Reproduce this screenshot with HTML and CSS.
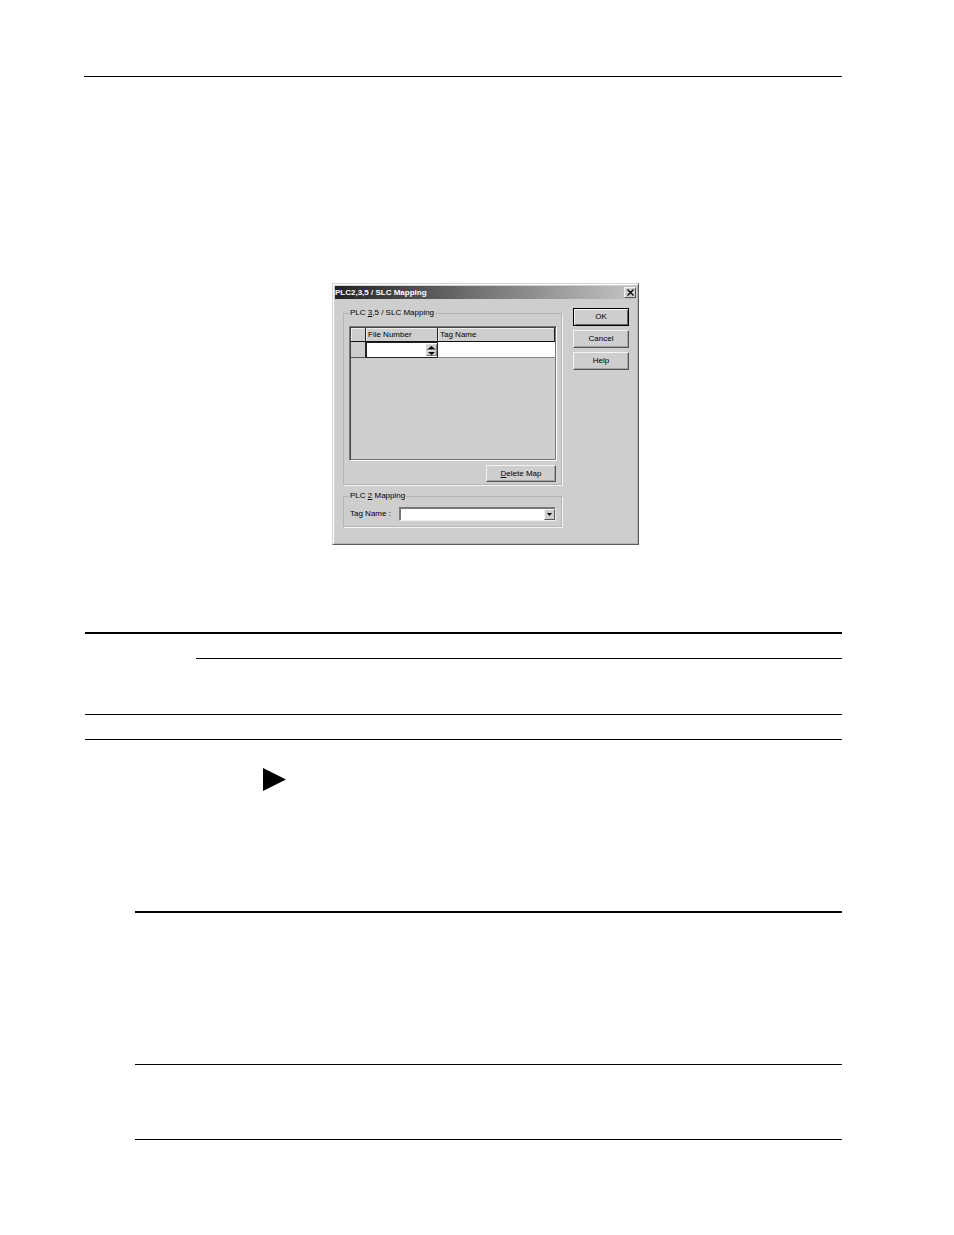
FILE: index.html
```html
<!DOCTYPE html>
<html lang="en">
<head>
  <meta charset="UTF-8">
  <meta name="viewport" content="width=device-width, initial-scale=1.0">
  <title>PLC2,3,5 / SLC Mapping</title>
  <link rel="stylesheet" href="styles.css">
</head>
<body>

<main class="page">
  <div class="page-top"></div>

  <form class="dialog" onsubmit="return false">
    <div class="title-bar">
      <span>PLC2,3,5 / SLC Mapping</span>
      <button type="button" class="close" aria-label="Close">
        <svg width="7" height="7" viewBox="0 0 7 7"><path d="M0.5 0.5L6.5 6.5M6.5 0.5L0.5 6.5" stroke="#000" stroke-width="1.3"/></svg>
      </button>
    </div>

    <div class="dialog-body">
      <div class="groups">
        <fieldset class="map-group">
          <legend>PLC <u>3</u>,5 / SLC Mapping</legend>
          <div class="grid-frame">
            <table class="grid">
              <thead>
                <tr><th class="col-select"></th><th class="col-file">File Number</th><th>Tag Name</th></tr>
              </thead>
              <tbody>
                <tr>
                  <td class="row-select"></td>
                  <td class="file-cell">
                    <div class="spinner">
                      <input type="text" aria-label="File Number">
                      <div class="spin-buttons">
                        <button type="button" aria-label="Increase"><svg width="7" height="3" viewBox="0 0 7 3"><path d="M0 3L3.5 0L7 3Z"/></svg></button>
                        <button type="button" aria-label="Decrease"><svg width="7" height="3" viewBox="0 0 7 3"><path d="M0 0L3.5 3L7 0Z"/></svg></button>
                      </div>
                    </div>
                  </td>
                  <td class="tag-cell"><input type="text" aria-label="Tag Name"></td>
                </tr>
              </tbody>
            </table>
          </div>
          <button type="button" class="btn btn-delete"><span><u>D</u>elete Map</span></button>
        </fieldset>

        <fieldset class="tag-group">
          <legend>PLC <u>2</u> Mapping</legend>
          <div class="field">
            <label for="tag-name">Tag Name :</label>
            <div class="combo">
              <select id="tag-name"><option></option></select>
              <span class="combo-arrow"><svg width="5" height="3" viewBox="0 0 5 3"><path d="M0 0L2.5 3L5 0Z"/></svg></span>
            </div>
          </div>
        </fieldset>
      </div>

      <div class="actions">
        <button type="submit" class="btn btn-default">OK</button>
        <button type="button" class="btn">Cancel</button>
        <button type="button" class="btn">Help</button>
      </div>
    </div>
  </form>

  <div class="steps">
    <div class="step step-head"></div>
    <div class="step step-indent"></div>
    <div class="step step-short"></div>
    <div class="step step-note">
      <svg class="note-arrow" width="23" height="23" viewBox="0 0 23 23"><path d="M0 0L23 11.5L0 23Z"/></svg>
    </div>
  </div>

  <div class="terms">
    <div class="term term-first"></div>
    <div class="term"></div>
  </div>
</main>

</body>
</html>
```

FILE: styles.css
```css
* {
  box-sizing: border-box;
}

body {
  margin: 0;
  background: #fff;
  font-family: "Liberation Sans", Arial, sans-serif;
  font-size: 8px;
  line-height: 10px;
  color: #000;
}

.page {
  padding: 76px 112px 95px 84px;
}

.page-top {
  height: 207px;
  border-top: 1px solid #000;
}

/* dialog window */
.dialog {
  width: 307px;
  margin-left: 248px;
  padding: 1px;
  background: #cecece;
  border: 1px solid;
  border-color: #d4d4d4 #5c5c5c #5c5c5c #d4d4d4;
  box-shadow: inset 1px 1px 0 #fff, inset -1px -1px 0 #b4b4b4;
}

.title-bar {
  display: flex;
  align-items: center;
  justify-content: space-between;
  height: 13px;
  margin: 1px 1px 0;
  background: linear-gradient(to right, #222, #777 50%, #c4c4c4);
  color: #fff;
  font-weight: bold;
}

button,
input,
select {
  margin: 0;
  padding: 0;
  border: 0;
  border-radius: 0;
  font: inherit;
  color: inherit;
}

.close,
.btn,
.spin-buttons button,
.combo-arrow {
  display: flex;
  align-items: center;
  justify-content: center;
  background: #cecece;
  border: 1px solid;
  border-color: #f4f4f4 #555 #555 #f4f4f4;
}

.close {
  width: 12px;
  height: 11px;
}

.dialog-body {
  display: flex;
  gap: 11px;
  padding: 9px 7px 16px 9px;
}

.groups {
  display: flex;
  flex-direction: column;
  gap: 6px;
  width: 219px;
}

fieldset {
  min-width: 0;
  margin: 0;
  border: 1px solid #b4b4b4;
  box-shadow: 1px 1px 0 #f4f4f4;
}

legend {
  padding: 0 1px;
}

.map-group {
  padding: 8px 4px 2px 5px;
}

.grid-frame {
  height: 135px;
  margin-bottom: 4px;
  border: 1px solid;
  border-color: #777 #fff #fff #777;
  box-shadow: inset 1px 1px 0 #444, inset -1px -1px 0 #777;
  padding: 1px 1px 1px 1px;
}

.grid {
  width: 100%;
  table-layout: fixed;
  border-collapse: separate;
  border-spacing: 0;
}

.grid th,
.grid td {
  padding: 0;
}

.grid th {
  height: 14px;
  padding-left: 2px;
  border-right: 1px solid #222;
  border-bottom: 1px solid #111;
  box-shadow: inset 1px 1px 0 #eee;
  font-weight: normal;
  text-align: left;
}

.grid .col-select {
  width: 15px;
}

.grid .col-file {
  width: 72px;
}

.row-select {
  border-right: 1px solid #222;
  border-bottom: 1px solid #555;
}

.file-cell {
  border-right: 1px solid #222;
  border-bottom: 1px solid #222;
}

.tag-cell {
  background: #fff;
  border-bottom: 1px solid #888;
}

.spinner {
  display: flex;
  height: 15px;
  padding: 1px 0;
  background: #fff;
  border: 1px solid #222;
  border-width: 1px 0 0 1px;
}

.grid input {
  display: block;
  width: 100%;
  min-width: 0;
  height: 13px;
  background: transparent;
  outline: none;
}

.spin-buttons {
  flex: none;
  width: 11px;
}

.spin-buttons button {
  width: 100%;
  height: 6px;
  border-color: #ddd #777 #777 #ddd;
}

/* push buttons */
.btn {
  width: 100%;
  height: 18px;
  box-shadow: inset -1px -1px 0 #a4a4a4;
}

.btn-default {
  border-color: #000;
  box-shadow: inset 1px 1px 0 #f4f4f4, inset -1px -1px 0 #666;
}

.btn-delete {
  width: 70px;
  height: 17px;
  margin: 0 1px 0 auto;
}

.actions {
  display: flex;
  flex-direction: column;
  gap: 4px;
  width: 56px;
}

/* tag name drop-down */
.tag-group {
  padding: 6px 5px 5px;
}

.field {
  display: flex;
  align-items: center;
}

.field label {
  width: 50px;
  padding-left: 1px;
}

.combo {
  position: relative;
  flex: 1;
}

.combo select {
  display: block;
  width: 100%;
  height: 14px;
  appearance: none;
  background: #fff;
  border: 1px solid;
  border-color: #777 #eee #eee #777;
  box-shadow: inset 1px 1px 0 #777;
}

.combo-arrow {
  position: absolute;
  top: 2px;
  right: 1px;
  width: 11px;
  height: 11px;
  pointer-events: none;
}

/* ruled rows under the dialog */
.steps {
  margin: 87px 0 0 1px;
}

.step {
  height: 25px;
  border-top: 1px solid #000;
}

.step-head {
  height: 26px;
  border-top-width: 2px;
}

.step-indent {
  height: 56px;
  margin-left: 111px;
}

.step-note {
  height: 172px;
  padding: 28px 0 0 178px;
}

.note-arrow {
  display: block;
}

.terms {
  margin-left: 51px;
  border-bottom: 1px solid #000;
}

.term {
  height: 75px;
  border-top: 1px solid #000;
}

.term-first {
  height: 153px;
  border-top-width: 2px;
}
```
